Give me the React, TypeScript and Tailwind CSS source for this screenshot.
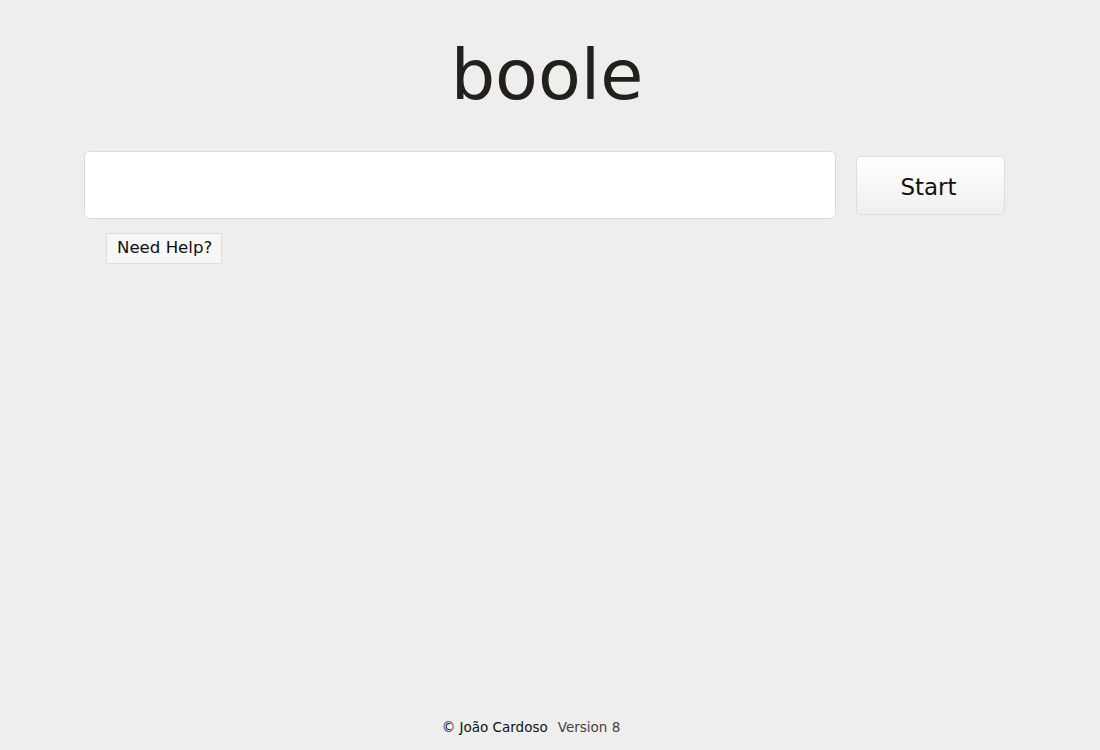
import React, { useState } from "react";

const App = () => {
  const [query, setQuery] = useState("");
  return (
    <div
      className="flex flex-col h-[750px] bg-[#eeeeee] text-[#111]"
      style={{ fontFamily: '"DejaVu Sans", "Liberation Sans", sans-serif' }}
    >
      <h1 className="text-center text-[70px] leading-none text-[#23201b] pt-[40px] pr-[6px]">
        boole
      </h1>
      <div className="flex items-center mt-[41px] pl-[84px]">
        <input
          type="text"
          value={query}
          onChange={(e) => setQuery(e.target.value)}
          className="w-[752px] h-[68px] rounded-[5px] border border-[#dcdcdc] bg-white px-3 text-2xl outline-none"
        />
        <button
          type="button"
          className="ml-[20px] w-[149px] h-[59px] rounded-[4px] border border-[#dddddd] bg-gradient-to-b from-white to-[#efefef] text-[23px] text-[#111] pt-[5px] pr-[4px]"
        >
          Start
        </button>
      </div>
      <div className="pl-[106px] mt-[14px]">
        <button
          type="button"
          className="h-[31px] pl-[10px] pr-[9px] rounded-[2px] border border-[#dddddd] bg-[#f7f7f7] text-[16.6px] text-[#111]"
        >
          Need Help?
        </button>
      </div>
      <footer className="mt-auto pb-[13px] text-center text-[13.5px] pr-[38px]">
        <span className="text-[#111]">© João Cardoso</span>
        <span className="ml-[10px] text-[#4a4040]">Version 8</span>
      </footer>
    </div>
  );
};

export default App;
